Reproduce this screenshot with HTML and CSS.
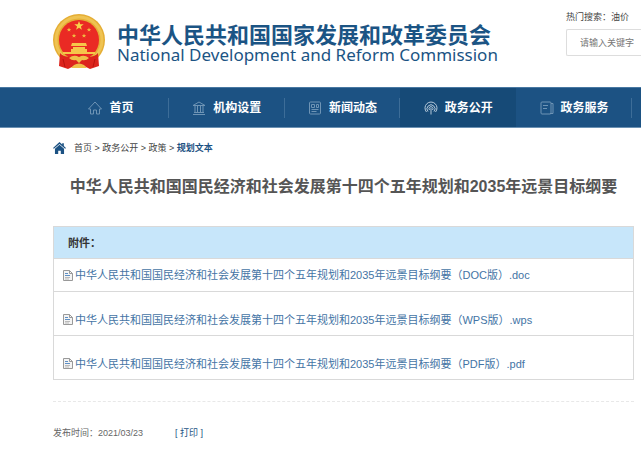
FILE: index.html
```html
<!DOCTYPE html>
<html lang="zh-CN">
<head>
  <meta charset="UTF-8" />
  <meta name="viewport" content="width=device-width, initial-scale=1.0" />
  <title>中华人民共和国国家发展和改革委员会</title>
  <link rel="stylesheet" href="styles.css">
</head>
<body>
  <header class="header">
    <a class="logo" href="#">
      <svg class="emblem" viewBox="0 0 52 56" aria-hidden="true">
        <circle cx="26" cy="26" r="26" fill="#e5ae35"/>
        <circle cx="26" cy="26" r="23" fill="none" stroke="#efc352" stroke-width="3"/>
        <circle cx="26" cy="26" r="20" fill="#ea2a24"/>
        <path d="M26 7l1.200 3.300h3.500l-2.800 2.100 1 3.400-2.900-2-2.900 2 1-3.400-2.800-2.100h3.500z" fill="#f8d24c"/>
        <g fill="#f0b840">
          <path id="star" d="M16 13.500l.6 1.500h1.600l-1.200 1 .4 1.600-1.400-.9-1.400.9.400-1.600-1.200-1h1.600z"/>
          <use href="#star" x="20"/>
          <use href="#star" x="5" y="6"/>
          <use href="#star" x="15" y="6"/>
        </g>
        <path d="M19 29h14l1 3h-16zM20 33h12v2h2v4h-16v-4h2zM10 38h32v2H10z" fill="#f6c64a"/>
        <path d="M7 39Q10 43 18 43L26 41L34 43Q42 43 45 39L46 52L37 55L31 52H21L15 55L6 52Z" fill="#dc241d"/>
        <path d="M16 44q5-4 10-1 5-3 10 1-3 3-7 2l-3 3-3-3q-4 1-7-2z" fill="#efc04a"/>
        <path d="M21 51q5-3 10 0l3 3H18z" fill="#efc04a"/>
        <path d="M10 45l2 8M42 45l-2 8" stroke="#b8150f"/>
      </svg>
      <span class="logo-text">
        <span class="logo-cn">中华人民共和国国家发展和改革委员会</span>
        <span class="logo-en">National Development and Reform Commission</span>
      </span>
    </a>
    <form class="search">
      <label for="keyword">热门搜索：油价</label>
      <input type="text" id="keyword" placeholder="请输入关键字" />
    </form>
  </header>

  <nav class="nav">
    <a href="#">
      <svg viewBox="0 0 14 14"><path d="M.5 8L7 1l6.500 7h-2v5h-3V9h-3v4h-3V8z"/></svg>
      首页
    </a>
    <a href="#">
      <svg viewBox="0 0 14 14"><path d="M1 4.500L7 1l6 3.500zM1 13.500h12M2 11.500h10M3 5v6M5.500 5v6M8.500 5v6M11 5v6"/></svg>
      机构设置
    </a>
    <a href="#">
      <svg viewBox="0 0 14 14"><path d="M2.500 1h9q1 0 1 1v10q0 1-1 1h-9q-1 0-1-1V2q0-1 1-1zM3.500 3.500h3v3h-3zM8.500 3.500h2v3h-2zM3.500 8.500h7M3.500 10.500h5"/></svg>
      新闻动态
    </a>
    <a class="active" href="#">
      <svg viewBox="0 0 14 14"><path d="M2.500 11A6 6 0 1 1 11.500 11M4 10.500a4 4 0 1 1 6 0M5.500 9a2 2 0 1 1 3 0M7 7v6.500"/></svg>
      政务公开
    </a>
    <a href="#">
      <svg viewBox="0 0 14 14"><path d="M2 1h8q1 0 1 1v10q0 1-1 1H2q-1 0-1-1V2q0-1 1-1zM11 2.500h2v10h-3M3 4.500h5M3 7.500h4"/></svg>
      政务服务
    </a>
  </nav>

  <main class="content">
    <div class="crumbs">
      <svg viewBox="0 0 12 11" aria-hidden="true"><path d="M6 0L0 5.500l.8.800L6 1.800l5.200 4.500.8-.8-2-1.800V1H8.500v1.300zM6 2.600L1.800 6.300V11h3V8h2.400v3h3V6.300z"/></svg>
      <span><a href="#">首页</a> &gt; <a href="#">政务公开</a> &gt; <a href="#">政策</a> &gt; <a class="current" href="#">规划文本</a></span>
    </div>

    <h1>中华人民共和国国民经济和社会发展第十四个五年规划和2035年远景目标纲要</h1>

    <table class="files">
      <thead>
        <tr><th>附件：</th></tr>
      </thead>
      <tbody>
        <tr>
          <td><a href="#"><svg viewBox="0 0 10 11"><path d="M.5.500h6l3 3v7h-9z" fill="#f4f4f4" stroke="#999"/><path d="M6.500.500v3h3" fill="none" stroke="#999"/><path d="M2 3.500h3M2 5.500h5" stroke="#5e8fc4"/><path d="M2 7.500h5M2 9h4" stroke="#bbb"/></svg>中华人民共和国国民经济和社会发展第十四个五年规划和2035年远景目标纲要（DOC版）.doc</a></td>
        </tr>
        <tr class="tall">
          <td><a href="#"><svg viewBox="0 0 10 11"><path d="M.5.500h6l3 3v7h-9z" fill="#f4f4f4" stroke="#999"/><path d="M6.500.500v3h3" fill="none" stroke="#999"/><path d="M2 3.500h3M2 5.500h5" stroke="#5e8fc4"/><path d="M2 7.500h5M2 9h4" stroke="#bbb"/></svg>中华人民共和国国民经济和社会发展第十四个五年规划和2035年远景目标纲要（WPS版）.wps</a></td>
        </tr>
        <tr class="tall">
          <td><a href="#"><svg viewBox="0 0 10 11"><path d="M.5.500h6l3 3v7h-9z" fill="#f4f4f4" stroke="#999"/><path d="M6.500.500v3h3" fill="none" stroke="#999"/><path d="M2 3.500h3M2 5.500h5" stroke="#5e8fc4"/><path d="M2 7.500h5M2 9h4" stroke="#bbb"/></svg>中华人民共和国国民经济和社会发展第十四个五年规划和2035年远景目标纲要（PDF版）.pdf</a></td>
        </tr>
      </tbody>
    </table>

    <div class="meta">
      <span>发布时间：2021/03/23</span>
      <button type="button" onclick="window.print()">[ 打印 ]</button>
    </div>
  </main>
</body>
</html>
```
FILE: styles.css
```css
* {
  box-sizing: border-box;
}

body {
  margin: 0;
  font-family: "Liberation Sans", "Noto Sans CJK SC", sans-serif;
  font-size: 9px;
  line-height: 16px;
  color: #444;
  background: #fff;
  overflow-x: hidden;
}

a {
  color: inherit;
  text-decoration: none;
}

/* header */
.header {
  display: flex;
  justify-content: space-between;
  padding: 9px 0 17px 53px;
}

.logo {
  display: flex;
  padding-top: 5px;
  color: #1b5484;
  white-space: nowrap;
}

.emblem {
  width: 52px;
  height: 56px;
}

.logo-text {
  display: flex;
  flex-direction: column;
  padding: 7px 0 0 12px;
}

.logo-cn {
  font-family: "Noto Sans CJK SC", sans-serif;
  font-size: 22px;
  font-weight: bold;
  line-height: 24px;
}

.logo-en {
  font-family: "Noto Sans", sans-serif;
  font-size: 17px;
  line-height: 20px;
}

.search {
  width: 75px;
}

.search label {
  display: block;
  margin-bottom: 4px;
}

.search input {
  width: 100%;
  height: 27px;
  padding: 0 0 0 13px;
  border: 1px solid #ddd;
  border-right: none;
  border-radius: 2px 0 0 2px;
  font: inherit;
}

.search input::placeholder {
  color: #777;
}

/* navigation */
.nav {
  display: flex;
  padding: 0 9px 0 53px;
  background: #1c5283;
  border-top: 1px solid #4878a2;
  border-bottom: 1px solid #6b91b3;
}

.nav a {
  flex: 1;
  display: flex;
  align-items: center;
  justify-content: center;
  gap: 7px;
  height: 39px;
  color: #fff;
  font-size: 12px;
  font-weight: bold;
  background: linear-gradient(#3d6d98, #3d6d98) no-repeat right center / 1px 20px;
}

.nav a.active {
  background: #164a77;
}

.nav svg {
  width: 14px;
  height: 14px;
  fill: none;
  stroke: #6e94b5;
}

.nav .active svg {
  stroke: #b5c9da;
}

/* article */
.content {
  padding: 12px 7px 16px 53px;
}

.crumbs {
  display: flex;
  align-items: center;
  gap: 8px;
}

.crumbs svg {
  width: 13px;
  height: 12px;
  fill: #1c5283;
}

.crumbs .current {
  color: #1c5283;
  font-weight: bold;
}

h1 {
  margin: 19px 0 27px;
  color: #555;
  font-size: 16px;
  line-height: 24px;
  text-align: center;
  white-space: nowrap;
}

.files {
  width: 100%;
  border-collapse: collapse;
  border: 1px solid #d9d9d9;
}

.files th {
  height: 32px;
  padding: 0 14px;
  border-bottom: 1px solid #d9d9d9;
  background: #c7e6fa;
  color: #333;
  font-family: "Liberation Serif", "Noto Sans CJK SC", serif;
  font-size: 11px;
  text-align: left;
}

.files td {
  height: 33px;
  padding: 0 9px;
  border-bottom: 1px solid #d9d9d9;
  font-size: 11px;
}

.files .tall td {
  height: 44px;
  padding-top: 12px;
}

.files a {
  display: flex;
  align-items: center;
  gap: 2px;
  color: #4474a5;
  white-space: nowrap;
}

.files svg {
  width: 10px;
  height: 11px;
}

.meta {
  display: flex;
  gap: 32px;
  margin-top: 21px;
  padding-top: 23px;
  border-top: 1px dashed #e8e8e8;
  color: #666;
}

.meta button {
  padding: 0;
  border: none;
  background: none;
  color: #1c5283;
  font: inherit;
  cursor: pointer;
}
```
